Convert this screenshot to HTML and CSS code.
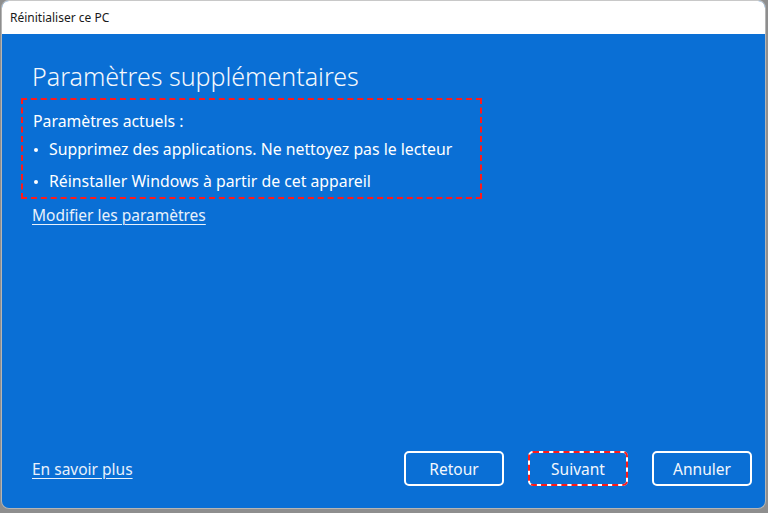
FILE: index.html
```html
<!DOCTYPE html>
<html lang="fr">
<head>
<meta charset="utf-8">
<title>Réinitialiser ce PC</title>
<link rel="stylesheet" href="styles.css">
</head>
<body>
<div class="window">
  <div class="titlebar">Réinitialiser ce PC</div>
  <div class="content">
    <div class="main">
      <h1 class="heading">Paramètres supplémentaires</h1>
      <div class="settings-box">
        <div class="settings-label">Paramètres actuels :</div>
        <ul class="settings-list">
          <li>Supprimez des applications. Ne nettoyez pas le lecteur</li>
          <li>Réinstaller Windows à partir de cet appareil</li>
        </ul>
      </div>
      <a class="link modify" href="#">Modifier les paramètres</a>
    </div>
    <div class="footer">
      <a class="link" href="#">En savoir plus</a>
      <div class="buttons">
        <button class="btn">Retour</button>
        <button class="btn focused">Suivant</button>
        <button class="btn">Annuler</button>
      </div>
    </div>
  </div>
</div>
</body>
</html>
```
FILE: styles.css
```css
html, body {
  margin: 0;
  padding: 0;
}
body {
  width: 768px;
  height: 513px;
  background: #8e8e8e;
  font-family: "Noto Sans", "Open Sans", sans-serif;
  overflow: hidden;
}
.window {
  margin-left: 1px;
  width: 765px;
  height: 509px;
  border: 1px solid #b5b5b5;
  border-top-color: #c8c8c8;
  box-sizing: border-box;
  border-radius: 8px;
  overflow: hidden;
  display: flex;
  flex-direction: column;
  background: #0a6fd5;
}
.titlebar {
  height: 33px;
  flex: none;
  background: #ffffff;
  color: #1a1a1a;
  font-size: 12px;
  line-height: 33px;
  padding-left: 8px;
}
.content {
  flex: 1;
  display: flex;
  flex-direction: column;
  justify-content: space-between;
  padding: 0 13px 22px 30px;
  color: #ffffff;
}
.heading {
  margin: 25px 0 0 0;
  font-weight: 300;
  font-size: 25px;
  line-height: 34px;
  color: #f4f8fc;
}
.settings-box {
  margin: 5px 0 0 -11px;
  border: 2px dashed #ff1a1a;
  padding: 10px 0 5px 10px;
  box-sizing: border-box;
  width: 461px;
}
.settings-label {
  font-size: 15.8px;
  line-height: 22px;
}
.settings-list {
  list-style: none;
  margin: 6px 0 0 0;
  padding: 0;
}
.settings-list li {
  font-size: 15.8px;
  line-height: 22px;
  margin-bottom: 10px;
  padding-left: 16px;
  position: relative;
}
.settings-list li:last-child {
  margin-bottom: 0;
}
.settings-list li::before {
  content: "";
  position: absolute;
  left: 1px;
  top: 10px;
  width: 4px;
  height: 4px;
  border-radius: 50%;
  background: #ffffff;
}
.link {
  color: #e8f1fb;
  font-size: 15.5px;
  line-height: 22px;
  text-decoration: underline;
  text-underline-offset: 3px;
  text-decoration-thickness: 1px;
}
.modify {
  display: inline-block;
  margin-top: 5px;
}
.footer {
  display: flex;
  align-items: center;
  justify-content: space-between;
}
.buttons {
  display: flex;
  gap: 24px;
}
.btn {
  width: 100px;
  height: 35px;
  box-sizing: border-box;
  border: 2px solid #ffffff;
  border-radius: 5px;
  background: #0a6fd5;
  color: #f2f7fd;
  font-family: "Noto Sans", "Open Sans", sans-serif;
  font-size: 15.5px;
  padding: 0;
}
.btn.focused {
  outline: 2px dashed #ff1a1a;
  outline-offset: -2px;
}
```
